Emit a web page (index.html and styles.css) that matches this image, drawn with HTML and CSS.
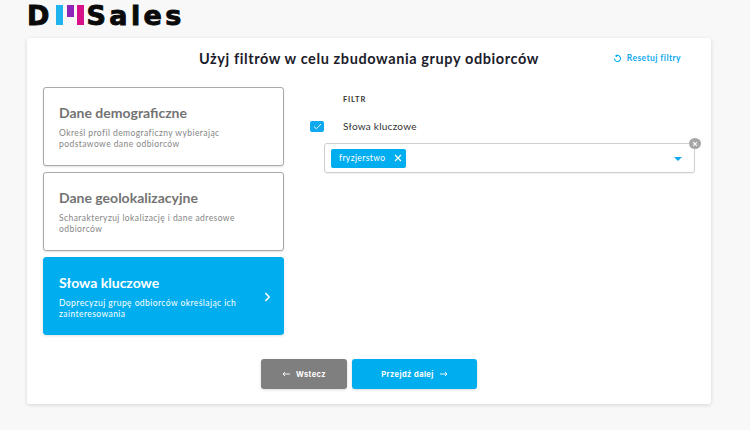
FILE: index.html
```html
<!DOCTYPE html>
<html lang="pl">
<head>
<meta charset="utf-8">
<title>DMSales</title>
<link rel="stylesheet" href="styles.css">
</head>
<body>
<header class="topbar">
  <div class="logo">
    <span class="logo-letter logo-d">D</span>
    <span class="logo-bars">
      <i class="bar bar-blue"></i>
      <i class="bar bar-purple"></i>
      <i class="bar bar-pink"></i>
    </span>
    <span class="logo-letter logo-sales">Sales</span>
  </div>
</header>
<main class="panel">
  <div class="panel-head">
    <span></span>
    <h1 class="title">Użyj filtrów w celu zbudowania grupy odbiorców</h1>
    <a class="reset">
      <svg class="reset-icon" viewBox="0 0 10 10" width="9" height="9"><path d="M3 2.2A3.4 3.4 0 1 1 1.6 5" fill="none" stroke="#00aeef" stroke-width="1.2"/><path d="M4.6 .4 2.4 2.2 4.6 3.8z" fill="#00aeef"/></svg>
      Resetuj filtry
    </a>
  </div>
  <div class="columns">
    <div class="steps">
      <section class="step">
        <h2>Dane demograficzne</h2>
        <p>Określ profil demograficzny wybierając podstawowe dane odbiorców</p>
      </section>
      <section class="step">
        <h2>Dane geolokalizacyjne</h2>
        <p>Scharakteryzuj lokalizację i dane adresowe odbiorców</p>
      </section>
      <section class="step step-active">
        <h2>Słowa kluczowe</h2>
        <p>Doprecyzuj grupę odbiorców określając ich zainteresowania</p>
        <svg class="chevron" viewBox="0 0 8 12" width="7" height="10"><path d="M1.5 1.2 6 6l-4.500 4.800" fill="none" stroke="#fff" stroke-width="1.800"/></svg>
      </section>
    </div>
    <div class="filters">
      <div class="filter-label">FILTR</div>
      <div class="filter-row">
        <span class="check">
          <svg viewBox="0 0 12 10" width="9" height="7"><path d="M1 5.200 4.400 8.200 11 1.500" fill="none" stroke="#fff" stroke-width="1.300"/></svg>
        </span>
        <span class="filter-name">Słowa kluczowe</span>
      </div>
      <div class="select">
        <span class="tag">fryzjerstwo
          <svg class="tag-x" viewBox="0 0 8 8" width="8" height="8"><path d="M1 1l6 6M7 1 1 7" stroke="#fff" stroke-width="1.200"/></svg>
        </span>
        <span class="caret"></span>
        <span class="clear">
          <svg viewBox="0 0 8 8" width="6" height="6"><path d="M1.500 1.500l5 5M6.500 1.500l-5 5" stroke="#fff" stroke-width="1.400"/></svg>
        </span>
      </div>
    </div>
  </div>
  <div class="actions">
    <button class="btn btn-back">
      <svg viewBox="0 0 8 6" width="8" height="6"><path d="M8 3H1M3 1 1 3l2 2" fill="none" stroke="#fff" stroke-width=".9"/></svg>
      Wstecz
    </button>
    <button class="btn btn-next">
      Przejdź dalej
      <svg viewBox="0 0 8 6" width="8" height="6"><path d="M0 3h7M5 1l2 2-2 2" fill="none" stroke="#fff" stroke-width=".9"/></svg>
    </button>
  </div>
</main>
</body>
</html>
```

FILE: styles.css
```css
* { box-sizing: border-box; }
html, body { margin: 0; height: 100%; }
body {
  background: #f8f8f8;
  font-family: Lato, "Liberation Sans", sans-serif;
  color: #1c1c2b;
  overflow: hidden;
}
.topbar { height: 38px; padding-left: 27px; }
.logo { display: flex; align-items: flex-start; height: 32px; color: #0a0a0a; }
.logo-letter {
  display: block;
  flex: none;
  font-family: "DejaVu Sans", Inter, sans-serif;
  font-weight: 700;
  font-size: 27px;
  line-height: 31px;
  -webkit-text-stroke: .9px #0a0a0a;
}
.logo-d { margin-right: 5px; letter-spacing: 0; }
.logo-sales { letter-spacing: 3.400px; }
.logo-bars { display: flex; gap: 3.500px; margin: 5px 2px 0 2px; align-items: flex-start; }
.bar { display: block; width: 7px; height: 20px; }
.bar-blue { background: #1fb3ef; }
.bar-purple { background: #8e24b8; height: 12px; }
.bar-pink { background: #d6118a; }

.panel {
  width: 684px;
  height: 366px;
  margin-left: 27px;
  padding: 11px 16px 0;
  background: #fff;
  border-radius: 3px;
  box-shadow: 0 1px 4px rgba(0,0,0,.14);
}
.panel-head {
  display: grid;
  grid-template-columns: 1fr auto 1fr;
  align-items: center;
  height: 18px;
  padding-right: 14px;
}
.title { margin: 0; font-size: 14.500px; letter-spacing: .6px; font-weight: 700; white-space: nowrap; padding-left: 14px; }
.reset {
  justify-self: end;
  display: flex;
  align-items: center;
  gap: 5px;
  color: #0ea9ee;
  font-size: 8.500px;
  font-weight: 700;
  letter-spacing: .42px;
}
.columns { display: flex; gap: 26px; margin-top: 20px; height: 248px; }
.steps { width: 241px; display: flex; flex-direction: column; gap: 6px; }
.step {
  position: relative;
  height: 79px;
  padding: 16px 15px 0;
  border: 1px solid #a9a9a9;
  border-radius: 3px;
  background: #fff;
  box-shadow: 0 1px 2px rgba(0,0,0,.12);
  color: #7a7a7a;
}
.step h2 { margin: 0 0 7px; font-size: 14px; line-height: 17px; font-weight: 700; color: #737373; }
.step p { margin: 0; font-size: 8.500px; letter-spacing: .43px; line-height: 11px; color: #858585; max-width: 190px; }
.step-active { background: #00aeef; border-color: #00aeef; box-shadow: 0 1px 3px rgba(0,0,0,.12); height: 78px; }
.step-active h2, .step-active p { color: #fff; }
.chevron { position: absolute; right: 12px; top: 34px; }
.filters { width: 385px; padding-top: 7px; }
.filter-label { padding-left: 33px; font-size: 7.500px; letter-spacing: .8px; font-weight: 700; line-height: 12px; color: #333; }
.filter-row { display: flex; align-items: center; margin-top: 14px; height: 12px; }
.check {
  width: 14px; height: 11px;
  display: flex; align-items: center; justify-content: center;
  background: #0ea9ee; border-radius: 2px;
}
.filter-name { margin-left: 19px; font-size: 10px; letter-spacing: .25px; color: #333; }
.select {
  position: relative;
  display: flex;
  align-items: center;
  justify-content: space-between;
  margin: 11px 0 0 14px;
  height: 30px;
  padding: 0 12px 0 6px;
  border: 1px solid #cfcfcf;
  border-radius: 3px;
  box-shadow: 0 1px 1px rgba(0,0,0,.06);
}
.tag {
  display: flex; align-items: center; justify-content: space-between;
  width: 75px; height: 19px; padding: 0 4px 0 8px;
  background: #00aeef; border-radius: 2px;
  color: #fff; font-size: 8.500px; letter-spacing: .4px;
}
.caret { width: 0; height: 0; margin-top: 2px; border: 4px solid transparent; border-top: 4px solid #0ea9ee; border-bottom: 0; }
.clear {
  position: absolute; top: -6px; right: -7px;
  width: 12px; height: 11px;
  display: flex; align-items: center; justify-content: center;
  border-radius: 50%; background: #a6a6a6;
}
.actions { display: flex; justify-content: center; gap: 5px; margin-top: 24px; }
.btn {
  display: flex; align-items: center; justify-content: center; gap: 6px;
  height: 30px; border: 0; border-radius: 3px;
  color: #fff; font-family: Inter, "Liberation Sans", sans-serif;
  font-size: 7.500px; letter-spacing: .42px; font-weight: 700;
  box-shadow: 0 1px 3px rgba(0,0,0,.15);
}
.btn-back { width: 86px; background: #7f7f7f; }
.btn-next { width: 125px; background: #00aeef; }
```
